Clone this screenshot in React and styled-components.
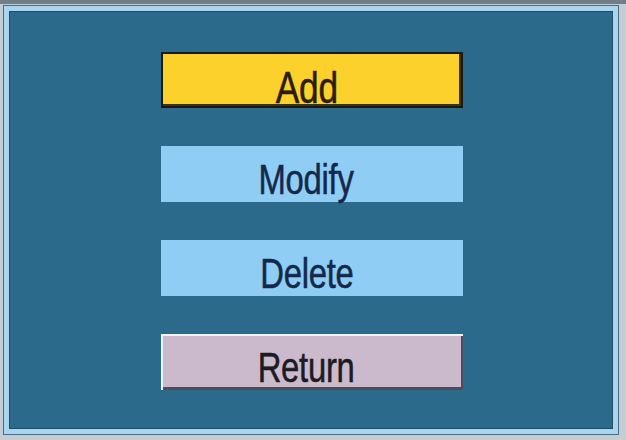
import React from 'react';
import styled, { createGlobalStyle } from 'styled-components';

const GlobalStyle = createGlobalStyle`
  html, body {
    margin: 0;
    padding: 0;
    background: #b9c4cc;
  }
`;

const Screen = styled.div`
  width: 626px;
  height: 440px;
  box-sizing: border-box;
  padding: 6px 8px 6px 4px;
  background: linear-gradient(#6f7e88 0, #6f7e88 4px, #c4cdd4 4px);
`;

const Frame = styled.div`
  height: 100%;
  box-sizing: border-box;
  border: 5px solid #a9d5f0;
  box-shadow: inset 0 0 0 1px #1f4f68, 0 0 0 1px #4d6b7e;
  background: #2b6a8b;
  display: flex;
  flex-direction: column;
  align-items: center;
  padding: 41px 0 0 2px;
  gap: 38px;
`;

const variants = {
  active: {
    bg: '#fdd12b',
    color: '#2a1c05',
    border: '2px solid #1b1a12',
    shadow: 'inset -2px -2px 0 #3a3218',
  },
  normal: {
    bg: '#8fcdf5',
    color: '#14294a',
    border: '0',
    shadow: 'none',
  },
  back: {
    bg: '#cbbacb',
    color: '#1d1b22',
    border: '0',
    shadow: 'inset 2px 2px 0 #eef4fa, inset -2px -3px 0 #4a4e5e',
  },
};

const MenuButton = styled.div`
  width: 302px;
  height: 56px;
  box-sizing: border-box;
  display: flex;
  align-items: flex-end;
  justify-content: center;
  padding-right: 11px;
  padding-bottom: ${p => (p.$kind === 'active' ? '0' : '2px')};
  background: ${p => variants[p.$kind].bg};
  border: ${p => variants[p.$kind].border};
  box-shadow: ${p => variants[p.$kind].shadow};
`;

const Label = styled.span`
  display: inline-block;
  font-family: "Liberation Sans", Arial, sans-serif;
  font-size: ${p => (p.$kind === 'active' ? '43px' : '40px')};
  line-height: 40px;
  color: ${p => variants[p.$kind].color};
  -webkit-text-stroke: 0.5px ${p => variants[p.$kind].color};
  transform: ${p => (p.$kind === 'active' ? 'translateY(2px) ' : '')}scale(0.82, 1.04);
  transform-origin: 50% 100%;
  letter-spacing: -0.3px;
`;

const items = [
  { label: 'Add', kind: 'active' },
  { label: 'Modify', kind: 'normal' },
  { label: 'Delete', kind: 'normal' },
  { label: 'Return', kind: 'back' },
];

export default function App() {
  return (
    <>
      <GlobalStyle />
      <Screen>
        <Frame>
          {items.map(item => (
            <MenuButton key={item.label} $kind={item.kind}>
              <Label $kind={item.kind}>{item.label}</Label>
            </MenuButton>
          ))}
        </Frame>
      </Screen>
    </>
  );
}
